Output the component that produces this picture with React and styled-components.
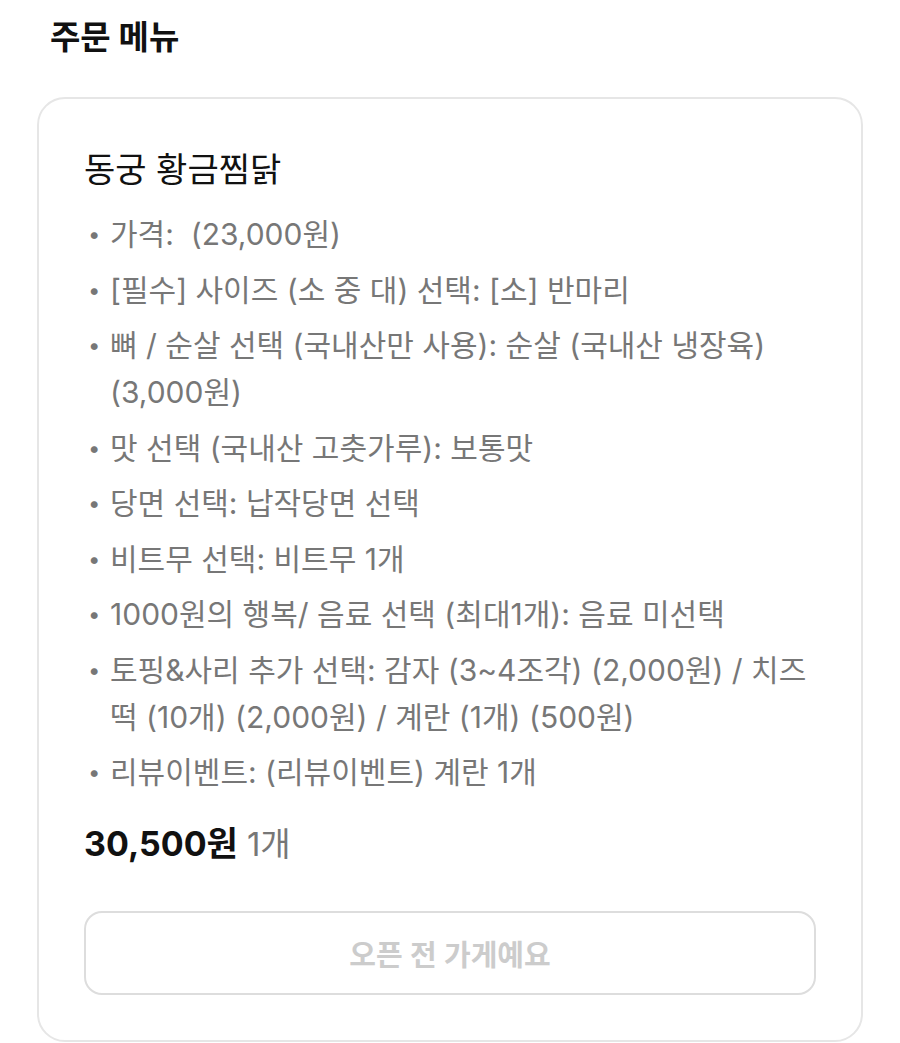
import styled, { createGlobalStyle } from "styled-components";

const GlobalStyle = createGlobalStyle`
  body {
    margin: 0;
    background: #ffffff;
    font-family: Inter, "Noto Sans CJK KR", "Noto Sans", sans-serif;
  }
`;

const options = [
  "가격:  (23,000원)",
  "[필수] 사이즈 (소 중 대) 선택: [소] 반마리",
  "뼈 / 순살 선택 (국내산만 사용): 순살 (국내산 냉장육) (3,000원)",
  "맛 선택 (국내산 고춧가루): 보통맛",
  "당면 선택: 납작당면 선택",
  "비트무 선택: 비트무 1개",
  "1000원의 행복/ 음료 선택 (최대1개): 음료 미선택",
  "토핑&사리 추가 선택: 감자 (3~4조각) (2,000원) / 치즈 떡 (10개) (2,000원) / 계란 (1개) (500원)",
  "리뷰이벤트: (리뷰이벤트) 계란 1개",
];

function App() {
  return (
    <Page>
      <GlobalStyle />
      <Heading>주문 메뉴</Heading>
      <Card>
        <MenuName>동궁 황금찜닭</MenuName>
        <OptionList>
          {options.map((text, i) => (
            <Option key={i}>{text}</Option>
          ))}
        </OptionList>
        <PriceRow>
          <Price>30,500원</Price>
          <Count>1개</Count>
        </PriceRow>
        <OrderButton disabled>오픈 전 가게예요</OrderButton>
      </Card>
    </Page>
  );
}

const Page = styled.div`
  padding: 14px 37px 0 37px;
`;

const Heading = styled.h2`
  margin: 0 0 0 13px;
  font-size: 33px;
  line-height: 46px;
  font-weight: 700;
  color: #111111;
`;

const Card = styled.div`
  margin-top: 37px;
  border: 2px solid #e6e6e6;
  border-radius: 28px;
  padding: 48px 45px 45px 45px;
  display: flex;
  flex-direction: column;
`;

const MenuName = styled.h3`
  margin: 0;
  font-size: 34px;
  line-height: 46px;
  font-weight: 400;
  color: #111111;
`;

const OptionList = styled.ul`
  list-style: none;
  margin: 18px 0 0 0;
  padding: 0;
  display: flex;
  flex-direction: column;
  gap: 8.5px;
`;

const Option = styled.li`
  position: relative;
  padding-left: 26px;
  font-size: 30px;
  line-height: 47px;
  color: #777777;
  white-space: pre-wrap;

  &::before {
    content: "•";
    position: absolute;
    left: 4px;
    top: 0;
    font-size: 22px;
  }
`;

const PriceRow = styled.div`
  display: flex;
  align-items: baseline;
  gap: 9px;
  margin-top: 22px;
`;

const Price = styled.span`
  font-size: 34px;
  line-height: 46px;
  font-weight: 700;
  color: #111111;
`;

const Count = styled.span`
  font-size: 33px;
  color: #777777;
`;

const OrderButton = styled.button`
  margin-top: 44px;
  height: 84px;
  border: 2px solid #dddddd;
  border-radius: 18px;
  background: #ffffff;
  font-family: inherit;
  font-size: 29px;
  font-weight: 600;
  color: #cccccc;
`;

export default App;
